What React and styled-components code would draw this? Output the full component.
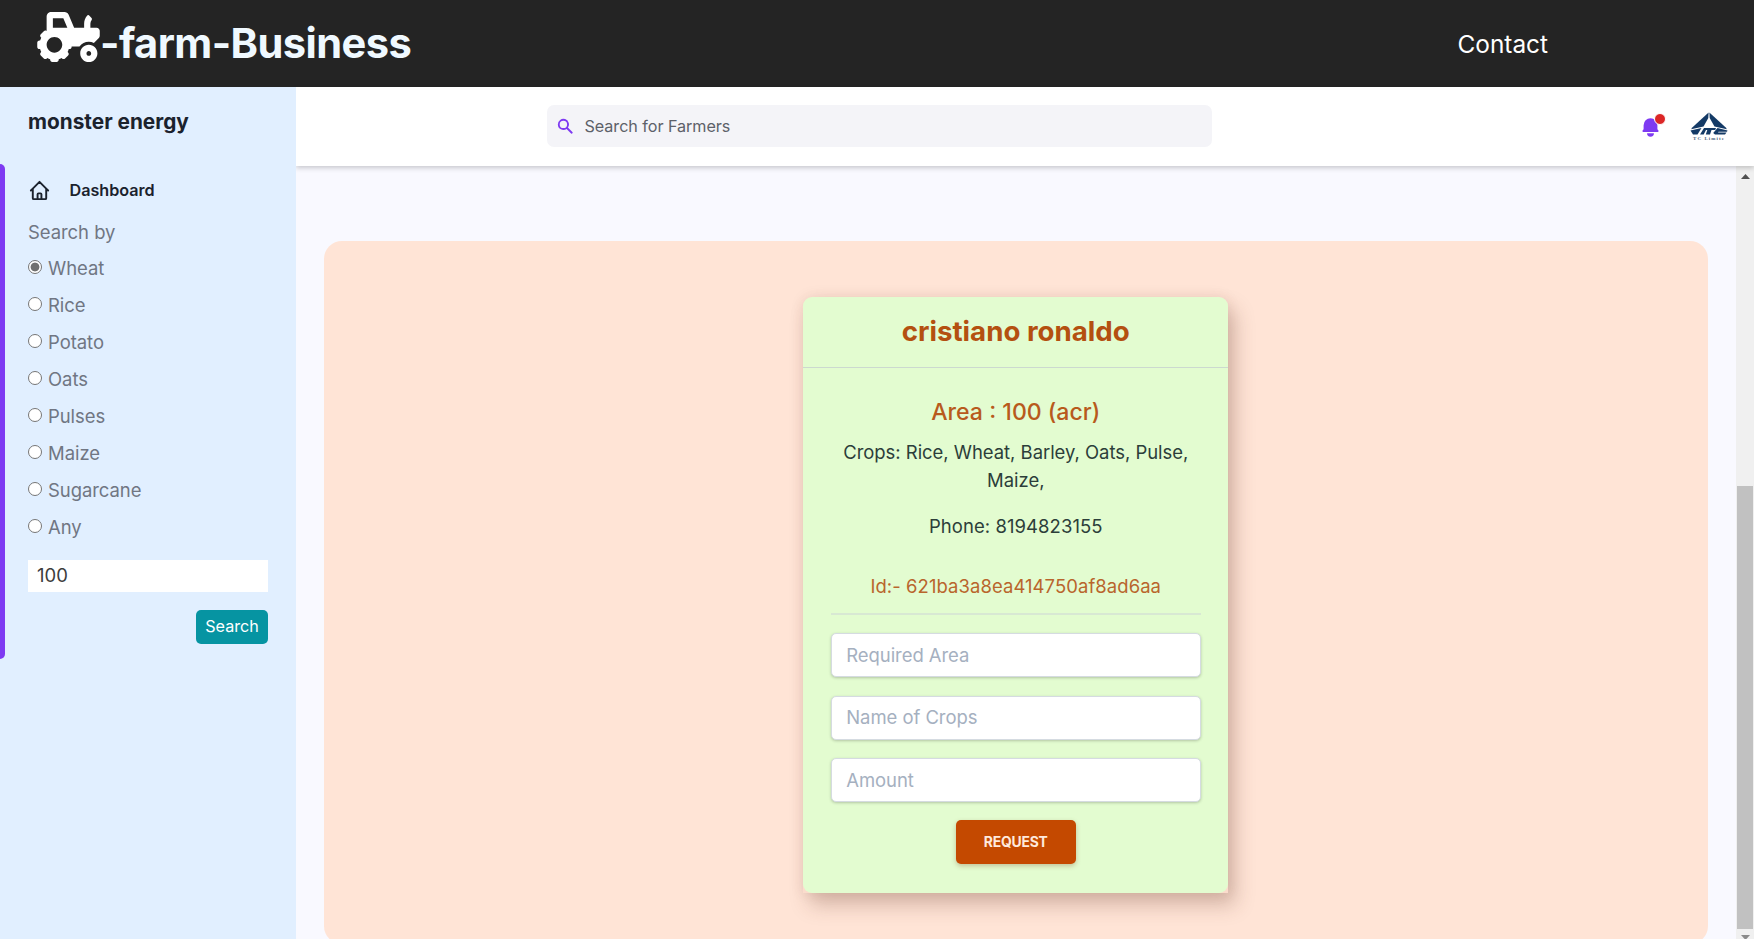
import React from "react";
import styled, { createGlobalStyle } from "styled-components";
import { FaTractor } from "react-icons/fa";

const GlobalStyle = createGlobalStyle`
  *, *::before, *::after { box-sizing: border-box; }
  html { font-size: 18.48px; }
  body { margin: 0; font-family: Inter, "Liberation Sans", sans-serif; line-height: 1.5; overflow: hidden; }
  h1, h2, h3, h4, p { margin: 0; }
  input, button { font: inherit; }
`;

const Page = styled.div`
  height: 939px;
  display: flex;
  flex-direction: column;
  overflow: hidden;
`;

const Banner = styled.header`
  flex: none;
  height: 87px;
  background: #242424;
  display: flex;
  justify-content: space-between;
  padding: 0 206px 0 37px;
  color: #f0f9ff;
`;

const Brand = styled.h1`
  display: flex;
  font-size: 41.6px;
  font-weight: 700;
  line-height: 87px;
  letter-spacing: -0.57px;
  svg { width: 63px; height: 50px; margin-top: 12px; color: #fff; }
`;

const ContactLink = styled.a`
  font-size: 24.4px;
  line-height: 88px;
  color: #fff;
`;

const Body = styled.div`
  flex: 1;
  min-height: 0;
  display: flex;
`;

const Sidebar = styled.aside`
  flex: none;
  width: 296px;
  background: #e1efff;
  padding-top: 18px;
  z-index: 2;
`;

const Company = styled.h2`
  padding: 1px 0 0 28px;
  font-size: 20.8px;
  line-height: 32px;
  font-weight: 700;
  color: #1b222d;
`;

const Filters = styled.section`
  position: relative;
  margin-top: 26px;
  height: 495px;
  padding: 15px 28px 0;
  &::before {
    content: "";
    position: absolute;
    inset: 0 auto 0 0;
    width: 5px;
    border-radius: 0 5px 5px 0;
    background: #7e3af2;
  }
`;

const DashboardLink = styled.a`
  display: flex;
  align-items: center;
  gap: 18.5px;
  height: 23px;
  font-size: 16.17px;
  font-weight: 600;
  color: #1b222d;
`;

const FilterLabel = styled.p`
  margin-top: 11px;
  height: 37px;
  line-height: 38px;
  letter-spacing: -0.05px;
  color: #707683;
`;

const Option = styled.label`
  display: flex;
  align-items: center;
  gap: 6px;
  height: 37px;
  letter-spacing: -0.05px;
  color: #707683;
`;

const Radio = styled.input`
  appearance: none;
  flex: none;
  width: 14px;
  height: 14px;
  margin: 0 0 3px;
  border: 1px solid #767676;
  border-radius: 50%;
  background: ${(p) => (p.checked ? "radial-gradient(circle, #707070 0 4px, #fff 4.8px)" : "#fff")};
`;

const AreaFilter = styled.input`
  display: block;
  width: 100%;
  height: 32px;
  margin-top: 14px;
  border: 0;
  padding: 0 9px 2px;
  background: #fff;
  color: #3c3c3c;
`;

const SearchButton = styled.button`
  display: block;
  width: 72px;
  height: 34px;
  margin: 18px 0 0 auto;
  padding: 0 0 1px;
  border: 0;
  border-radius: 5px;
  background: #0694a2;
  color: #fff;
  font-size: 16.17px;
`;

const Content = styled.div`
  flex: 1;
  min-width: 0;
  display: flex;
  flex-direction: column;
`;

const TopBar = styled.div`
  flex: none;
  height: 79px;
  padding: 0 26px 0 251px;
  display: flex;
  align-items: center;
  background: #fff;
  box-shadow: 0 2px 5px rgba(0, 0, 0, 0.2);
  z-index: 1;
`;

const SearchBox = styled.label`
  width: 665px;
  height: 42px;
  margin-right: auto;
  margin-bottom: 1px;
  padding-left: 9px;
  display: flex;
  align-items: center;
  gap: 10px;
  border-radius: 7px;
  background: #f4f4f8;
  color: #7e3af2;
`;

const SearchInput = styled.input`
  flex: 1;
  border: 0;
  padding: 0;
  background: none;
  font-size: 16.17px;
  letter-spacing: -0.05px;
  &::placeholder { color: #5d6169; opacity: 1; }
`;

const Notifications = styled.button`
  position: relative;
  border: 0;
  padding: 0;
  margin: 2px 28px 0 0;
  width: 23px;
  height: 23px;
  background: none;
  color: #7e3af2;
  svg { display: block; }
  &::after {
    content: "";
    position: absolute;
    top: -3px;
    right: -4px;
    width: 12px;
    height: 12px;
    border: 1px solid #fff;
    border-radius: 50%;
    background: #dc2626;
  }
`;

const Scroller = styled.div`
  flex: 1;
  min-height: 0;
  display: flex;
  background: #f9f9ff;
  overflow: hidden;
`;

const Main = styled.main`
  flex: 1;
  padding: 75px 28px 0 27.5px;
`;

const Panel = styled.section`
  height: 703px;
  padding-top: 56px;
  border-radius: 18px;
  background: #ffe4d6;
`;

const CardFrame = styled.div`
  width: 425px;
  margin: 0 auto;
  border-radius: 9px 9px 0 0;
  background: #fbdccc;
  box-shadow: 7px 12px 20px rgba(95, 50, 35, 0.26), 0 0 14px rgba(95, 50, 35, 0.1);
`;

const Card = styled.article`
  height: 596px;
  border-radius: 9px;
  background: #e3fcd0;
  text-align: center;
  color: #2c3e3a;
`;

const FarmerName = styled.h3`
  height: 71px;
  border-bottom: 1px solid #ccd9cf;
  line-height: 68px;
  font-size: 27.7px;
  font-weight: 700;
  color: #b45010;
`;

const CardBody = styled.div`
  padding: 27px 27.5px 0;
`;

const AreaTitle = styled.h4`
  font-size: 23.1px;
  line-height: 34px;
  font-weight: 500;
  color: #b85a1c;
`;

const Detail = styled.p`
  line-height: 27.7px;
  margin-top: ${(p) => p.$gap}px;
  letter-spacing: ${(p) => p.$tracking || 0}px;
`;

const FarmerId = styled.p`
  margin-top: 32px;
  height: 42px;
  border-bottom: 2px solid #d8e8d3;
  letter-spacing: 0.07px;
  color: #b9652c;
`;

const Field = styled.input`
  display: block;
  width: 100%;
  height: 44px;
  margin-top: 18.3px;
  padding: 0 14.5px 1px;
  border: 1px solid #d5dbe1;
  border-radius: 5px;
  background: #fff;
  box-shadow: 0 1px 3px rgba(0, 0, 0, 0.22);
  letter-spacing: -0.05px;
  &::placeholder { color: #a5b0c0; opacity: 1; }
`;

const RequestButton = styled.button`
  display: block;
  width: 120px;
  height: 44px;
  margin: 18px auto 0;
  padding: 0;
  border: 0;
  border-radius: 5px;
  background: #c44900;
  box-shadow: 0 2px 5px rgba(120, 60, 20, 0.3);
  color: #ffe9dc;
  font-size: 13.86px;
  font-weight: 700;
  letter-spacing: -0.2px;
`;

const Scrollbar = styled.div`
  flex: none;
  width: 18px;
  display: flex;
  flex-direction: column;
  align-items: center;
  background: #f0f0f0;
  padding-top: 8px;
  svg { flex: none; }
`;

const Thumb = styled.div`
  flex: none;
  width: 16px;
  height: 443px;
  margin: 307px 0 6px;
  background: #c1c1c1;
`;

const crops = ["Wheat", "Rice", "Potato", "Oats", "Pulses", "Maize", "Sugarcane", "Any"];
const fields = ["Required Area", "Name of Crops", "Amount"];

function HomeIcon() {
  return (
    <svg width="23" height="23" viewBox="0 0 24 24" fill="none" stroke="currentColor" strokeWidth="2" strokeLinecap="round" strokeLinejoin="round">
      <path d="M3 12l2-2m0 0l7-7 7 7M5 10v10a1 1 0 001 1h3m10-11l2 2m-2-2v10a1 1 0 01-1 1h-3m-6 0a1 1 0 001-1v-4a1 1 0 011-1h2a1 1 0 011 1v4a1 1 0 001 1m-6 0h6" />
    </svg>
  );
}

function SearchIcon() {
  return (
    <svg width="18.5" height="18.5" viewBox="0 0 20 20" fill="currentColor">
      <path fillRule="evenodd" clipRule="evenodd" d="M8 4a4 4 0 100 8 4 4 0 000-8zM2 8a6 6 0 1110.89 3.476l4.817 4.817a1 1 0 01-1.414 1.414l-4.816-4.816A6 6 0 012 8z" />
    </svg>
  );
}

function BellIcon() {
  return (
    <svg width="23" height="23" viewBox="0 0 20 20" fill="currentColor">
      <path d="M10 2a6 6 0 00-6 6v3.586l-.707.707A1 1 0 004 14h12a1 1 0 00.707-1.707L16 11.586V8a6 6 0 00-6-6zM10 18a3 3 0 01-3-3h6a3 3 0 01-3 3z" />
    </svg>
  );
}

const LogoName = styled.text`
  font: 700 5px "Liberation Serif", serif;
  fill: #4f6780;
`;

function CompanyLogo() {
  return (
    <svg width="38" height="30" viewBox="0 0 38 30">
      <g fill="#143a66">
        <path d="M18.600 0.500 18.300 6 13.500 14.500 1.200 17.200 2 15.800Z" />
        <path d="M19.400 0.500 19.700 6 24.500 14.500 36.800 17.200 36 15.800Z" />
        <path d="M0.500 18.400 11.500 16 7.500 22.500H3Z" />
        <path d="M14 16H26l-.8 2H21.500l-1.500 4.500h-4.200l1.500-4.500H16l-2.300 4.500H10Z" />
        <path d="M27.500 16 37.500 18.400l-.5 1.300H28.500l-.5.800h8.500L35 22.500H25l-1.800-1.600Z" />
      </g>
      <LogoName x="3" y="27.500" textLength="31">TC Limite</LogoName>
    </svg>
  );
}

function Arrow({ down }) {
  return (
    <svg width="9" height="5" viewBox="0 0 9 5">
      <path d={down ? "M0 0h9L4.500 5Z" : "M0 5h9L4.500 0Z"} fill={down ? "#8a8a8a" : "#505050"} />
    </svg>
  );
}

export default function App() {
  return (
    <Page>
      <GlobalStyle />
      <Banner>
        <Brand><FaTractor />-farm-Business</Brand>
        <ContactLink>Contact</ContactLink>
      </Banner>
      <Body>
        <Sidebar>
          <Company>monster energy</Company>
          <Filters>
            <DashboardLink><HomeIcon />Dashboard</DashboardLink>
            <FilterLabel>Search by</FilterLabel>
            {crops.map((name) => (
              <Option key={name}>
                <Radio type="radio" name="crop" checked={name === "Wheat"} readOnly />
                {name}
              </Option>
            ))}
            <AreaFilter defaultValue="100" />
            <SearchButton>Search</SearchButton>
          </Filters>
        </Sidebar>
        <Content>
          <TopBar>
            <SearchBox><SearchIcon /><SearchInput placeholder="Search for Farmers" /></SearchBox>
            <Notifications aria-label="Notifications"><BellIcon /></Notifications>
            <CompanyLogo />
          </TopBar>
          <Scroller>
            <Main>
              <Panel>
                <CardFrame>
                  <Card>
                    <FarmerName>cristiano ronaldo</FarmerName>
                    <CardBody>
                      <AreaTitle>Area : 100 (acr)</AreaTitle>
                      <Detail $gap={10} $tracking={-0.03}>Crops: Rice, Wheat, Barley, Oats, Pulse, Maize,</Detail>
                      <Detail $gap={19} $tracking={0.08}>Phone: 8194823155</Detail>
                      <FarmerId>Id:- 621ba3a8ea414750af8ad6aa</FarmerId>
                      {fields.map((name) => <Field key={name} placeholder={name} />)}
                      <RequestButton>REQUEST</RequestButton>
                    </CardBody>
                  </Card>
                </CardFrame>
              </Panel>
            </Main>
            <Scrollbar><Arrow /><Thumb /><Arrow down /></Scrollbar>
          </Scroller>
        </Content>
      </Body>
    </Page>
  );
}
